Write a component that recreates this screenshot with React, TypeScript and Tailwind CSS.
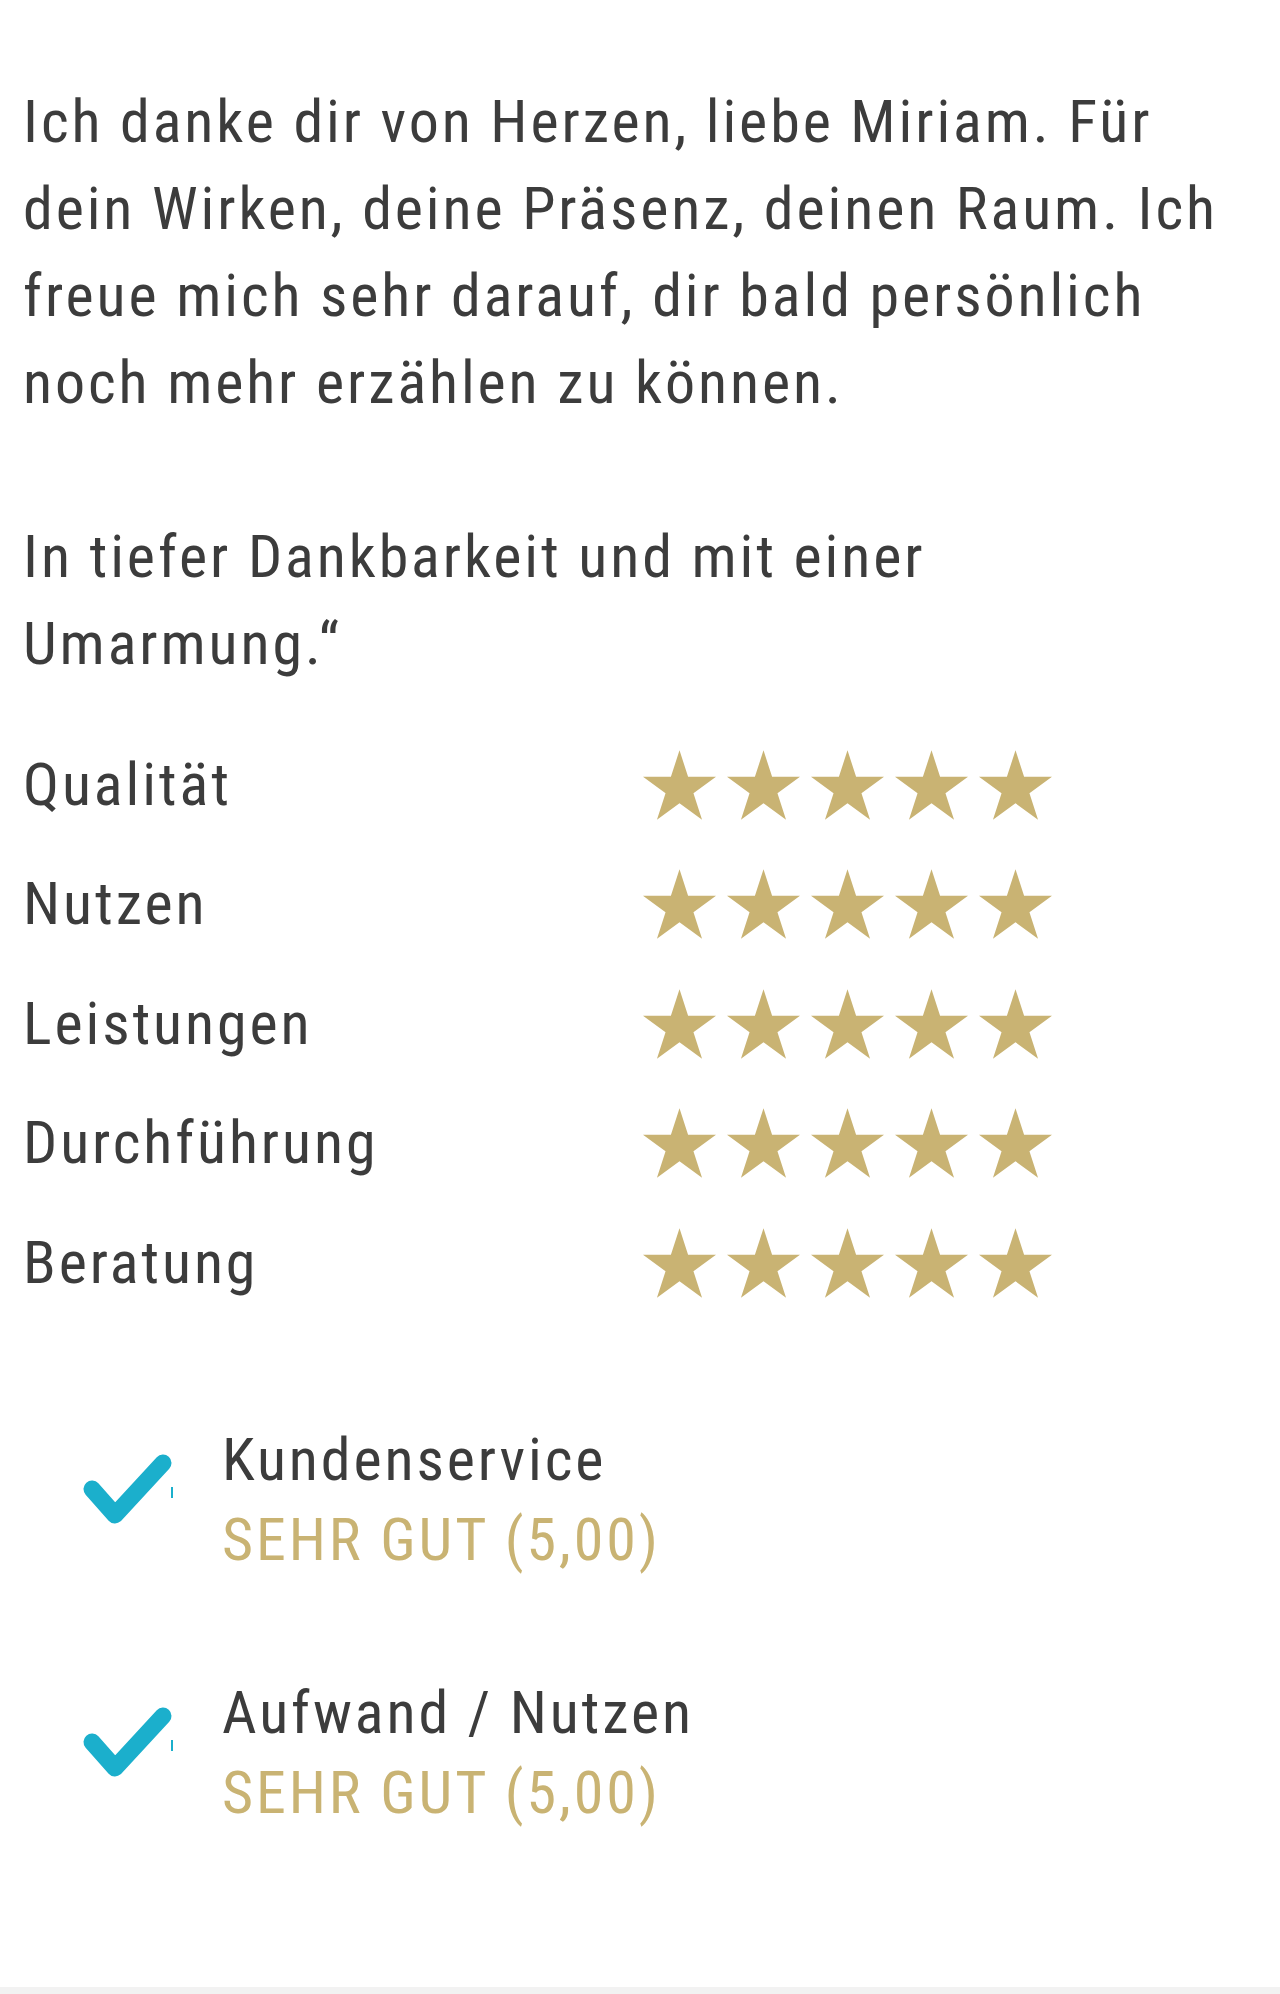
const RATINGS = ['Qualität', 'Nutzen', 'Leistungen', 'Durchführung', 'Beratung'];

const SUMMARY = [
  { title: 'Kundenservice', value: 'SEHR GUT (5,00)' },
  { title: 'Aufwand / Nutzen', value: 'SEHR GUT (5,00)' },
];

function Star() {
  return (
    <svg viewBox="2.4 0 95.2 90.5" className="w-[73px] h-[70px] fill-[#c9b373]">
      <polygon points="50,0 61.2,34.5 97.6,34.5 68.2,55.9 79.4,90.5 50,69.1 20.6,90.5 31.8,55.9 2.4,34.5 38.8,34.5" />
    </svg>
  );
}

function Check() {
  return (
    <svg viewBox="0 0 199 100" className="w-[199px] h-[100px] shrink-0">
      <polyline
        points="69,39 92,65 140,13"
        fill="none"
        stroke="#1bafcc"
        strokeWidth="17"
        strokeLinecap="round"
        strokeLinejoin="round"
      />
      <rect x="148" y="37" width="2" height="11" fill="#1bafcc" />
    </svg>
  );
}

export default function App() {
  return (
    <div className="bg-white text-[#3c3c3c] font-['Roboto_Condensed',Roboto,sans-serif] tracking-[2.9px] text-[60px]">
      <div className="px-[23px] pt-[78px] pb-[154px]">
        <p className="leading-[87px]">
          Ich danke dir von Herzen, liebe Miriam. Für
          <br />
          dein Wirken, deine Präsenz, deinen Raum. Ich
          <br />
          freue mich sehr darauf, dir bald persönlich
          <br />
          noch mehr erzählen zu können.
          <br />
          <br />
          In tiefer Dankbarkeit und mit einer
          <br />
          Umarmung.“
        </p>

        {/* Bewertungen */}
        <div className="mt-[38px] flex flex-col">
          {RATINGS.map((r) => (
            <div key={r} className="h-[119.5px] grid grid-cols-[620px_1fr] items-center">
              <span className="leading-none">{r}</span>
              <div className="flex gap-[11px]">
                <Star />
                <Star />
                <Star />
                <Star />
                <Star />
              </div>
            </div>
          ))}
        </div>

        {/* Zusammenfassung */}
        <div className="mt-[97px] flex flex-col gap-[93px]">
          {SUMMARY.map((s) => (
            <div key={s.title} className="flex items-center">
              <Check />
              <div className="leading-[80px]">
                <div>{s.title}</div>
                <div className="text-[#c9b373]">{s.value}</div>
              </div>
            </div>
          ))}
        </div>
      </div>
      <div className="h-[8px] bg-[#f2f2f2]" />
    </div>
  );
}
